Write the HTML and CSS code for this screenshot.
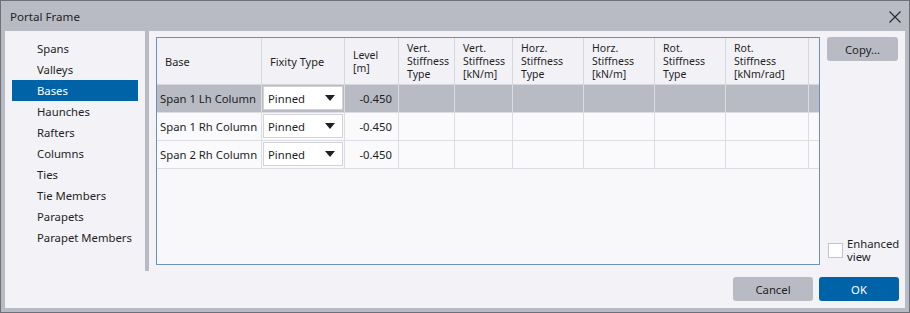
FILE: index.html
```html
<!DOCTYPE html>
<html>
<head>
<meta charset="utf-8">
<link rel="stylesheet" href="styles.css">
</head>
<body>
<div class="window">
  <div class="titlebar">
    <span class="title">Portal Frame</span>
    <svg class="close" width="12" height="12" viewBox="0 0 12 12"><path d="M0.5 0.5 L11.5 11.5 M11.5 0.5 L0.5 11.5" stroke="#2b2b2b" stroke-width="1.2" fill="none"/></svg>
  </div>
  <div class="body">
    <div class="main">
      <nav class="nav">
        <div class="nav-item">Spans</div>
        <div class="nav-item">Valleys</div>
        <div class="nav-item selected">Bases</div>
        <div class="nav-item">Haunches</div>
        <div class="nav-item">Rafters</div>
        <div class="nav-item">Columns</div>
        <div class="nav-item">Ties</div>
        <div class="nav-item">Tie Members</div>
        <div class="nav-item">Parapets</div>
        <div class="nav-item">Parapet Members</div>
      </nav>
      <div class="divider"></div>
      <div class="content">
        <div class="grid">
          <div class="hcell">Base</div>
          <div class="hcell">Fixity Type</div>
          <div class="hcell">Level<br>[m]</div>
          <div class="hcell">Vert.<br>Stiffness<br>Type</div>
          <div class="hcell">Vert.<br>Stiffness<br>[kN/m]</div>
          <div class="hcell">Horz.<br>Stiffness<br>Type</div>
          <div class="hcell">Horz.<br>Stiffness<br>[kN/m]</div>
          <div class="hcell">Rot.<br>Stiffness<br>Type</div>
          <div class="hcell">Rot.<br>Stiffness<br>[kNm/rad]</div>
          <div class="hcell last"></div>

          <div class="cell sel name">Span 1 Lh Column</div>
          <div class="cell sel drop"><div class="select"><span>Pinned</span><span class="tri"></span></div></div>
          <div class="cell sel num">-0.450</div>
          <div class="cell sel"></div><div class="cell sel"></div><div class="cell sel"></div><div class="cell sel"></div><div class="cell sel"></div><div class="cell sel"></div><div class="cell sel last"></div>

          <div class="cell name">Span 1 Rh Column</div>
          <div class="cell drop"><div class="select"><span>Pinned</span><span class="tri"></span></div></div>
          <div class="cell num">-0.450</div>
          <div class="cell"></div><div class="cell"></div><div class="cell"></div><div class="cell"></div><div class="cell"></div><div class="cell"></div><div class="cell last"></div>

          <div class="cell name">Span 2 Rh Column</div>
          <div class="cell drop"><div class="select"><span>Pinned</span><span class="tri"></span></div></div>
          <div class="cell num">-0.450</div>
          <div class="cell"></div><div class="cell"></div><div class="cell"></div><div class="cell"></div><div class="cell"></div><div class="cell"></div><div class="cell last"></div>
        </div>
        <div class="side">
          <button class="btn copy">Copy...</button>
          <label class="check"><span class="box"></span><span class="check-text">Enhanced<br>view</span></label>
        </div>
      </div>
    </div>
    <div class="footer">
      <button class="btn cancel">Cancel</button>
      <button class="btn ok">OK</button>
    </div>
  </div>
</div>
</body>
</html>
```

FILE: styles.css
```css
* { box-sizing: border-box; }
html, body { margin: 0; padding: 0; }
body {
  width: 910px;
  height: 313px;
  font-family: "Noto Sans", "DejaVu Sans", sans-serif;
  font-size: 11.3px;
  color: #1f1f1f;
  background: #f2f2f7;
  overflow: hidden;
}
.window {
  width: 910px;
  height: 313px;
  border: 1px solid #6d7079;
  background: #b9bbc4;
  padding: 0 4px 4px 4px;
  display: flex;
  flex-direction: column;
}
.titlebar {
  height: 30px;
  flex-shrink: 0;
  display: flex;
  align-items: center;
  justify-content: space-between;
  margin: 0 -4px;
  padding-left: 9px;
  padding-right: 8px;
}
.title { font-size: 11.6px; color: #1f1f1f; line-height: 16px; margin-top: 1px; }
.close { display: block; margin-top: 1px; }
.body {
  flex: 1;
  background: #f2f2f7;
  display: flex;
  flex-direction: column;
}
.main {
  height: 240px;
  flex-shrink: 0;
  display: flex;
}
.nav {
  width: 140px;
  flex-shrink: 0;
  padding: 7px 7px 0 7px;
}
.nav-item {
  height: 21px;
  line-height: 21px;
  padding-left: 25px;
  white-space: nowrap;
}
.nav-item.selected {
  background: #0063a7;
  color: #fff;
}
.divider {
  width: 4px;
  flex-shrink: 0;
  background: #b9bbc4;
}
.content {
  flex: 1;
  min-width: 0;
  display: flex;
  padding: 6px 7px 6px 7px;
  gap: 7px;
}
.grid {
  width: 664px;
  flex-shrink: 0;
  border: 1px solid #6a92bd;
  background: #f8f8fa;
  display: grid;
  grid-template-columns: 105px 83px 54px 56px 58px 71px 71px 71px 83px 1fr;
  grid-template-rows: 47px 28px 28px 28px;
  align-content: start;
}
.hcell {
  border-right: 1px solid #d7d8de;
  border-bottom: 1px solid #d7d8de;
  background: #f2f2f6;
  padding-left: 8px;
  padding-top: 1px;
  font-size: 10.5px;
  line-height: 13px;
  display: flex;
  align-items: center;
  white-space: nowrap;
  color: #1f1f1f;
}
.hcell:first-child, .hcell:nth-child(2) { font-size: 11px; }
.cell {
  border-right: 1px solid #dcdde2;
  border-bottom: 1px solid #dcdde2;
  background: #fafafc;
  display: flex;
  align-items: center;
  white-space: nowrap;
}
.last { border-right: none; }
.cell.sel { background: #b9bbc4; }
.cell.name { padding-left: 3px; }
.cell.num { justify-content: flex-end; padding-right: 6px; }
.cell.drop { padding: 1px 1px 2px 1px; align-items: stretch; }
.select {
  flex: 1;
  background: #fff;
  border: 1px solid #d2d3d9;
  display: flex;
  align-items: center;
  justify-content: space-between;
  padding: 0 7px 0 4px;
}
.tri {
  width: 0;
  height: 0;
  border-left: 5px solid transparent;
  border-right: 5px solid transparent;
  border-top: 6px solid #1f1f1f;
}
.side {
  flex: 1;
  display: flex;
  flex-direction: column;
  justify-content: space-between;
}
.btn {
  font-family: "Noto Sans", "DejaVu Sans", sans-serif;
  font-size: 11.3px;
  border: none;
  border-radius: 3px;
  height: 24px;
  padding: 0;
  background: #b9bbc4;
  color: #1f1f1f;
}
.copy { width: 71px; }
.check {
  display: flex;
  align-items: flex-start;
  gap: 4px;
  margin-bottom: 2px;
}
.box {
  width: 15px;
  height: 15px;
  border: 1px solid #c3c4cb;
  background: #fff;
  margin-top: 6px;
  margin-left: 1px;
}
.check-text { line-height: 13px; }
.footer {
  flex: 1;
  display: flex;
  justify-content: flex-end;
  align-items: flex-start;
  padding: 6px 6px 0 0;
  gap: 6px;
}
.cancel, .ok { width: 80px; }
.ok { background: #0063a7; color: #fff; }
```
